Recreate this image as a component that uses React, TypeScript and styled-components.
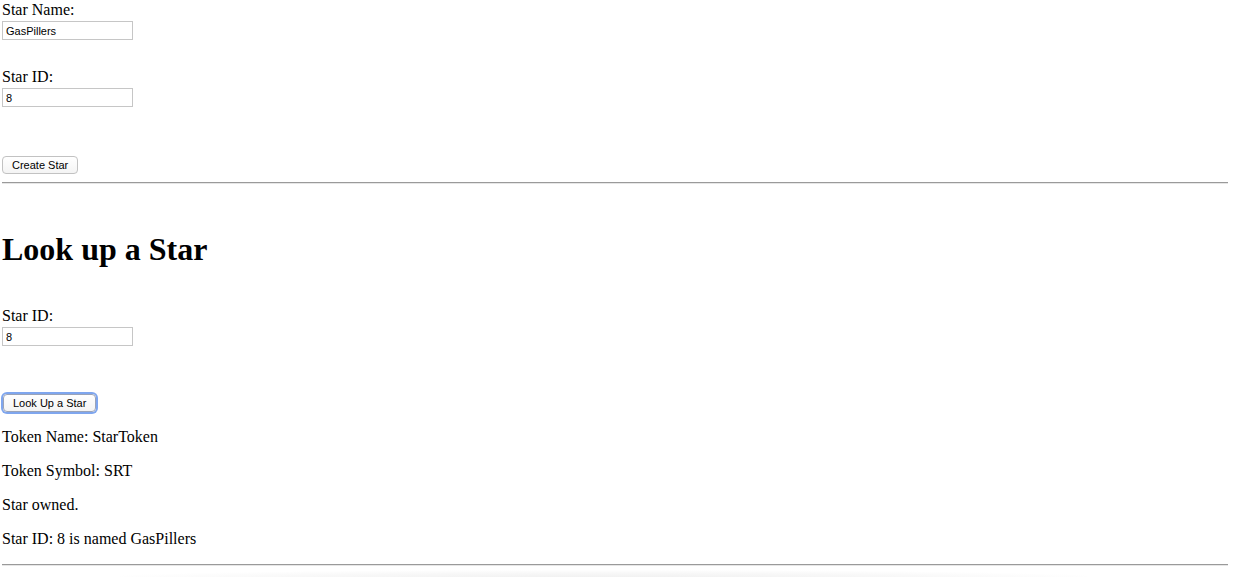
import React from 'react';
import styled, { createGlobalStyle } from 'styled-components';

const GlobalStyle = createGlobalStyle`
  html, body {
    margin: 0;
    padding: 0;
    background: #ffffff;
  }

  body {
    padding: 0 5px 0 2px;
    font-family: "Liberation Serif", "Times New Roman", serif;
    font-size: 16px;
    line-height: 18px;
    color: #000000;
    overflow: hidden;
  }
`;

const Page = styled.div`
  display: flex;
  flex-direction: column;
  padding-top: 1px;
`;

const Field = styled.div<{ $top: number }>`
  display: flex;
  flex-direction: column;
  align-items: flex-start;
  margin-top: ${props => props.$top}px;
`;

const Label = styled.label`
  display: block;
  height: 18px;
  line-height: 18px;
`;

const TextInput = styled.input`
  box-sizing: border-box;
  width: 131px;
  height: 19px;
  margin: 2px 0 0;
  padding: 0 3px;
  border: 1px solid #c6c6c6;
  border-radius: 0;
  background: #ffffff;
  font-family: "Liberation Sans", Arial, sans-serif;
  font-size: 11px;
  color: #000000;
  outline: none;
`;

const Button = styled.button<{ $top: number; $focused?: boolean }>`
  align-self: flex-start;
  box-sizing: border-box;
  height: 18px;
  margin: ${props => props.$top}px 0 0 ${props => (props.$focused ? 1 : 0)}px;
  padding: 0 9px;
  border: 1px solid ${props => (props.$focused ? '#9aa3b8' : '#c2c2c2')};
  border-radius: 4px;
  background: linear-gradient(#ffffff, #f4f4f4);
  font-family: "Liberation Sans", Arial, sans-serif;
  font-size: 11px;
  line-height: 16px;
  color: #000000;
  box-shadow: ${props => (props.$focused ? '0 0 0 2px #7fa6ee' : 'none')};
  cursor: default;
`;

const Rule = styled.hr<{ $top: number }>`
  width: 100%;
  height: 0;
  margin: ${props => props.$top}px 0 0;
  border: none;
  border-top: 1px solid #9a9a9a;
  border-bottom: 1px solid #e6e6e6;
`;

const Heading = styled.h1`
  margin: 47px 0 0;
  font-size: 32px;
  line-height: 37px;
  font-weight: bold;
`;

const Result = styled.p`
  margin: 16px 0 0;
  line-height: 18px;
`;

const Shade = styled.div`
  height: 8px;
  margin: 4px 140px 0 118px;
  background: radial-gradient(ellipse at 50% 100%, #f0f0f0 0%, #f8f8f8 45%, rgba(255, 255, 255, 0) 75%);
`;

const App: React.FC = () => {
  const results = [
    'Token Name: StarToken',
    'Token Symbol: SRT',
    'Star owned.',
    'Star ID: 8 is named GasPillers',
  ];

  return (
    <>
      <GlobalStyle />
      <Page>
        <Field $top={0}>
          <Label>Star Name:</Label>
          <TextInput type="text" defaultValue="GasPillers" />
        </Field>
        <Field $top={28}>
          <Label>Star ID:</Label>
          <TextInput type="text" defaultValue="8" />
        </Field>
        <Button $top={49}>Create Star</Button>
        <Rule $top={8} />

        <Heading>Look up a Star</Heading>
        <Field $top={39}>
          <Label>Star ID:</Label>
          <TextInput type="text" defaultValue="8" />
        </Field>
        <Button $top={48} $focused>Look Up a Star</Button>

        {results.map(text => (
          <Result key={text}>{text}</Result>
        ))}
        <Rule $top={16} />
        <Shade />
      </Page>
    </>
  );
};

export default App;
